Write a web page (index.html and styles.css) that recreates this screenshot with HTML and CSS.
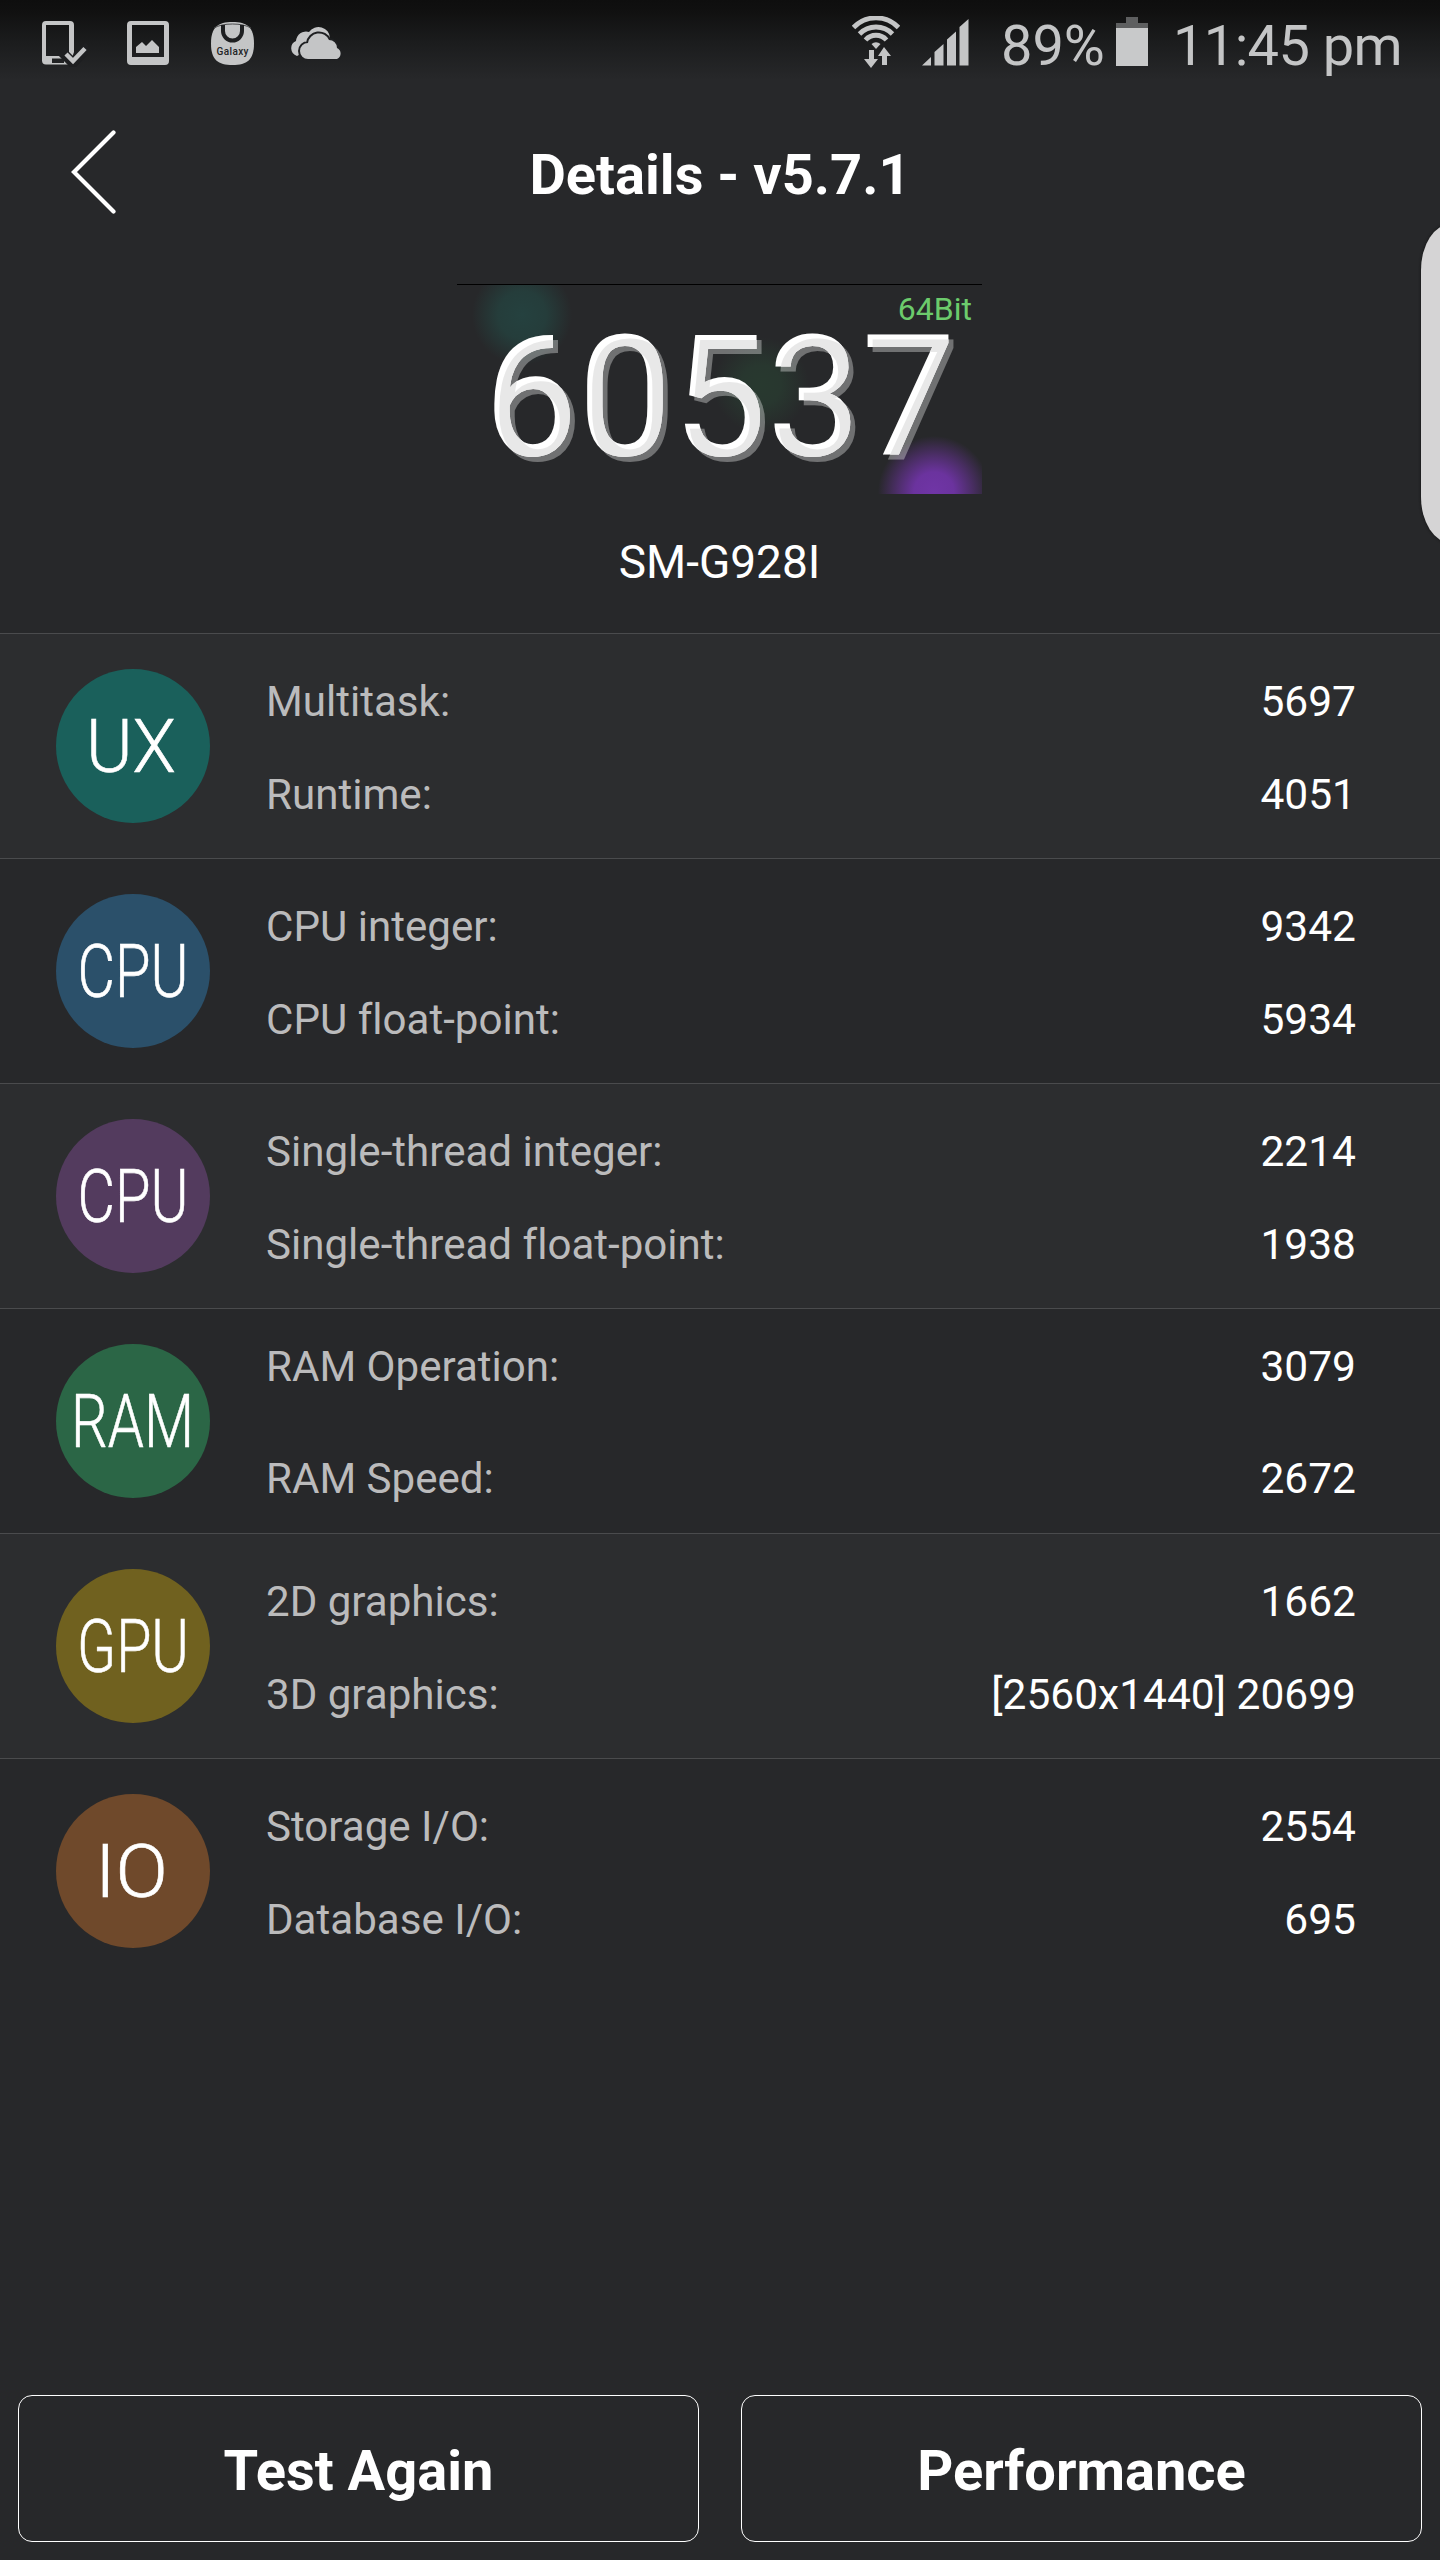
FILE: index.html
```html
<!DOCTYPE html>
<html>

<head>
    <meta charset="utf-8">
    <title>Details - v5.7.1</title>
    <link rel="stylesheet" href="styles.css">
</head>

<body>
    <div class="status-bar">
        <div class="status-left">
            <svg class="icon-device" width="46" height="46" viewBox="0 0 46 46">
                <path fill-rule="evenodd" d="M4 0h24a4 4 0 0 1 4 4v39.500H4a4 4 0 0 1-4-4V4a4 4 0 0 1 4-4zM4 4v31h23V4zM10 37.500v4.500h12v-4.500z" fill="#c4c5c6"/>
                <path d="M19 30l12 12 16-17" fill="none" stroke="#1e1f21" stroke-width="10"/>
                <path d="M33 28v18h-6z" fill="#1e1f21"/>
                <path d="M24 33l7 7 12-12.500" fill="none" stroke="#c4c5c6" stroke-width="4.500"/>
            </svg>
            <svg class="icon-picture" width="42" height="44" viewBox="0 0 42 44">
                <path fill-rule="evenodd" d="M4 0h34a4 4 0 0 1 4 4v36a4 4 0 0 1-4 4H4a4 4 0 0 1-4-4V4a4 4 0 0 1 4-4zM5 4v32h32V4z" fill="#c4c5c6"/>
                <path d="M9 32v-6l6-5 4 4 6-6 7 7v6z" fill="#c4c5c6"/>
            </svg>
            <svg class="icon-galaxy" width="43" height="43" viewBox="0 0 43 43">
                <path d="M21.500 0C36 0 43 5 43 21.500S36 43 21.500 43 0 38 0 21.500 7 0 21.500 0z" fill="#c4c5c6"/>
                <path d="M3 6Q10 2 21.500 2T40 6" fill="none" stroke="#4a4b4d" stroke-width="1"/>
                <path d="M12 3v6a9.500 9.500 0 0 0 19 0V3" fill="none" stroke="#1e1f21" stroke-width="4"/>
                <text x="5.500" y="32.500" textLength="32" class="galaxy-text">Galaxy</text>
            </svg>
            <svg class="icon-cloud" width="53" height="34" viewBox="0 0 53 34">
                <path d="M8 30a8 8 0 0 1-1-15 10 10 0 0 1 13-9 11.500 11.500 0 0 1 21 6z" fill="#c4c5c6"/>
                <path d="M19 33a8 8 0 0 1 0-16 11 11 0 0 1 21-3 8 8 0 0 1 8 8 6 6 0 0 1 0 11z" fill="#c4c5c6" stroke="#1f2022" stroke-width="4" paint-order="stroke"/>
            </svg>
        </div>
        <div class="status-right">
            <svg class="icon-wifi" width="48" height="52" viewBox="0 0 48 52">
                <g fill="none" stroke="#c4c5c6" stroke-width="4.800">
                    <path d="M1.500 11.500a31 31 0 0 1 45 0"/>
                    <path d="M7.500 18a23 23 0 0 1 33 0"/>
                    <path d="M13.500 24a14 14 0 0 1 21 0"/>
                </g>
                <path d="M19.500 28a7 7 0 0 1 9 0L24 33z" fill="#c4c5c6"/>
                <path d="M17 34h5v9h4l-7 9-7-9h5zM30 49h5v-9h4l-7-9-6 9h4z" fill="#c4c5c6"/>
            </svg>
            <svg class="icon-signal" width="47" height="47" viewBox="0 0 47 47">
                <path d="M0 46.500l9-8.500v8.500zM12.500 46.500V33l9-8v21.500zM25 46.500V20.500l9-8v34zM37.500 46.500V8l9-8v46.500z" fill="#c4c5c6"/>
            </svg>
            <span class="battery-level">89%</span>
            <svg class="icon-battery" width="32" height="49" viewBox="0 0 32 49">
                <path d="M10 0h12v6h10v5H0V6h10z" fill="#5e5f60"/>
                <path d="M0 11h32v38H0z" fill="#c8c9ca"/>
            </svg>
            <span class="clock">11:45 pm</span>
        </div>
    </div>

    <div class="header">
        <svg class="back" width="46" height="84" viewBox="0 0 46 84">
            <path d="M43.500 2.500L4 42 43.500 81.500" fill="none" stroke="#fff" stroke-width="4.200" stroke-linecap="round"/>
        </svg>
        <h1 class="title">Details - v5.7.1</h1>
    </div>

    <div class="hero">
        <div class="score-box">
            <span class="bit">64Bit</span>
            <span class="score">60537</span>
        </div>
        <span class="model">SM-G928I</span>
    </div>

    <div class="row odd">
        <svg class="badge" viewBox="0 0 154 154">
            <circle cx="77" cy="77" r="77" fill="#1a605b"/>
            <text x="30" y="103" textLength="90" lengthAdjust="spacingAndGlyphs">UX</text>
        </svg>
        <div class="lines">
            <div class="line"><span class="name">Multitask:</span><span class="value">5697</span></div>
            <div class="line"><span class="name">Runtime:</span><span class="value">4051</span></div>
        </div>
    </div>

    <div class="row">
        <svg class="badge" viewBox="0 0 154 154">
            <circle cx="77" cy="77" r="77" fill="#2b506a"/>
            <text x="21.500" y="103" textLength="111" lengthAdjust="spacingAndGlyphs">CPU</text>
        </svg>
        <div class="lines">
            <div class="line"><span class="name">CPU integer:</span><span class="value">9342</span></div>
            <div class="line"><span class="name">CPU float-point:</span><span class="value">5934</span></div>
        </div>
    </div>

    <div class="row odd">
        <svg class="badge" viewBox="0 0 154 154">
            <circle cx="77" cy="77" r="77" fill="#533b5e"/>
            <text x="21.500" y="103" textLength="111" lengthAdjust="spacingAndGlyphs">CPU</text>
        </svg>
        <div class="lines">
            <div class="line"><span class="name">Single-thread integer:</span><span class="value">2214</span></div>
            <div class="line"><span class="name">Single-thread float-point:</span><span class="value">1938</span></div>
        </div>
    </div>

    <div class="row">
        <svg class="badge" viewBox="0 0 154 154">
            <circle cx="77" cy="77" r="77" fill="#2b6646"/>
            <text x="15" y="103" textLength="123" lengthAdjust="spacingAndGlyphs">RAM</text>
        </svg>
        <div class="lines wide">
            <div class="line"><span class="name">RAM Operation:</span><span class="value">3079</span></div>
            <div class="line"><span class="name">RAM Speed:</span><span class="value">2672</span></div>
        </div>
    </div>

    <div class="row odd">
        <svg class="badge" viewBox="0 0 154 154">
            <circle cx="77" cy="77" r="77" fill="#70611f"/>
            <text x="21" y="103" textLength="112" lengthAdjust="spacingAndGlyphs">GPU</text>
        </svg>
        <div class="lines">
            <div class="line"><span class="name">2D graphics:</span><span class="value">1662</span></div>
            <div class="line"><span class="name">3D graphics:</span><span class="value">[2560x1440] 20699</span></div>
        </div>
    </div>

    <div class="row">
        <svg class="badge" viewBox="0 0 154 154">
            <circle cx="77" cy="77" r="77" fill="#6f492b"/>
            <text x="39" y="103" textLength="73" lengthAdjust="spacingAndGlyphs">IO</text>
        </svg>
        <div class="lines">
            <div class="line"><span class="name">Storage I/O:</span><span class="value">2554</span></div>
            <div class="line"><span class="name">Database I/O:</span><span class="value">695</span></div>
        </div>
    </div>

    <div class="footer">
        <button class="btn">Test Again</button>
        <button class="btn">Performance</button>
    </div>

    <!-- edge panel handle, over the page -->
    <div class="edge-handle"></div>

    <!-- bevel and hard shadow for the score digits -->
    <svg class="defs" width="0" height="0">
        <filter id="bevel" x="-5%" y="-5%" width="110%" height="110%" color-interpolation-filters="sRGB">
            <feOffset in="SourceAlpha" dx="5" dy="5" result="shift"/>
            <feFlood flood-color="#ffffff" flood-opacity="0.34"/>
            <feComposite in2="shift" operator="in" result="shadow"/>
            <feGaussianBlur in="shift" stdDeviation="0.6" result="soft"/>
            <feFlood flood-color="#e8e8e8"/>
            <feComposite in2="soft" operator="in"/>
            <feComposite in2="SourceAlpha" operator="in" result="face"/>
            <feMerge>
                <feMergeNode in="shadow"/>
                <feMergeNode in="SourceGraphic"/>
                <feMergeNode in="face"/>
            </feMerge>
        </filter>
    </svg>
</body>

</html>
```
FILE: styles.css
```css
* {
    box-sizing: border-box;
}

body {
    margin: 0;
    position: relative;
    display: flex;
    flex-direction: column;
    height: 2560px;
    overflow: hidden;
    font-family: Roboto, Arial, sans-serif;
    font-variant-ligatures: none;
    color: white;
    background: #27282a linear-gradient(#0e0e0e 0, #101010 10px, #1b1c1d 42px, #27282a 80px) no-repeat top / 100% 80px;
}

svg {
    display: block;
    flex-shrink: 0;
}

.status-bar {
    display: flex;
    justify-content: space-between;
    height: 92px;
    padding: 0 38px 0 42px;
}

.status-left,
.status-right {
    display: flex;
    align-items: flex-start;
}

.icon-device {
    margin-top: 21px;
}

.icon-picture {
    margin: 21px 0 0 39px;
}

.icon-galaxy {
    margin: 22px 0 0 42px;
}

.galaxy-text {
    font-family: Roboto, Arial, sans-serif;
    font-size: 10px;
    font-weight: 500;
    fill: #222325;
}

.icon-cloud {
    margin: 26px 0 0 35px;
}

.icon-wifi {
    margin-top: 16px;
}

.icon-signal {
    margin: 19px 0 0 22px;
}

.battery-level,
.clock {
    font-size: 56px;
    line-height: 92px;
    color: #c4c5c6;
}

.battery-level {
    margin-left: 32px;
}

.clock {
    letter-spacing: -0.6px;
}

.icon-battery {
    margin: 17px 25px 0 11px;
}

.header {
    display: grid;
    grid-template-columns: 200px 1fr 200px;
    align-items: center;
    height: 166px;
}

.back {
    margin-left: 70px;
    margin-bottom: 7px;
}

.title {
    margin: 0;
    font-size: 56px;
    font-weight: 700;
    line-height: 66px;
    text-align: center;
}

.hero {
    display: flex;
    flex-direction: column;
    align-items: center;
    height: 375px;
    padding: 26px 1px 0 0;
}

.score-box {
    display: flex;
    flex-direction: column;
    width: 525px;
    height: 210px;
    border-top: 1px solid black;
    background:
        radial-gradient(circle at 65px 30px, #25413f 0, #253d3b 24px, rgba(39, 40, 42, 0) 50px),
        radial-gradient(circle at 304px 100px, #28392f 0, #28372f 20px, rgba(39, 40, 42, 0) 48px),
        radial-gradient(circle at 477px 207px, #7035a6 0, #6b339e 20px, #4c2e68 37px, rgba(39, 40, 42, 0) 56px);
}

.bit {
    align-self: flex-end;
    margin: 6px 10px 0 0;
    font-size: 32px;
    line-height: 36px;
    color: #6ccb6c;
}

.score {
    align-self: center;
    margin-top: -37px;
    font-size: 168px;
    line-height: 216px;
    filter: url(#bevel);
}

.model {
    margin-top: 43px;
    font-size: 46px;
    line-height: 50px;
}

.row {
    display: flex;
    height: 225px;
    padding: 0 84px 0 56px;
    border-top: 1px solid #4a4b4d;
}

.odd {
    background-color: #2c2d2f;
}

.badge {
    width: 154px;
    height: 154px;
    margin-top: 35px;
    overflow: visible;
    font-size: 75px;
    font-weight: 300;
    fill: white;
}

.badge text {
    stroke: white;
    stroke-width: 0.6px;
}

.lines {
    display: flex;
    flex: 1;
    flex-direction: column;
    gap: 40px;
    margin-left: 56px;
    padding-top: 41px;
}

.wide {
    gap: 59px;
    padding-top: 31px;
}

.line {
    display: flex;
    justify-content: space-between;
    font-size: 42.500px;
    line-height: 53px;
}

.name {
    font-size: 42.100px;
    color: #bbbbbc;
}

.footer {
    display: flex;
    gap: 42px;
    margin-top: auto;
    padding: 0 18px 18px;
}

.btn {
    flex: 1;
    height: 147px;
    padding: 4px 0 0;
    border: 1.500px solid white;
    border-radius: 14px;
    background: none;
    font-family: inherit;
    font-size: 56px;
    font-weight: 700;
    color: white;
}

.edge-handle {
    position: absolute;
    top: 224px;
    right: -41px;
    width: 60px;
    height: 319px;
    border-radius: 30px / 46px;
    background-color: #d5d4d5;
    box-shadow: 0 0 3px #111;
}

.defs {
    position: absolute;
}
```
